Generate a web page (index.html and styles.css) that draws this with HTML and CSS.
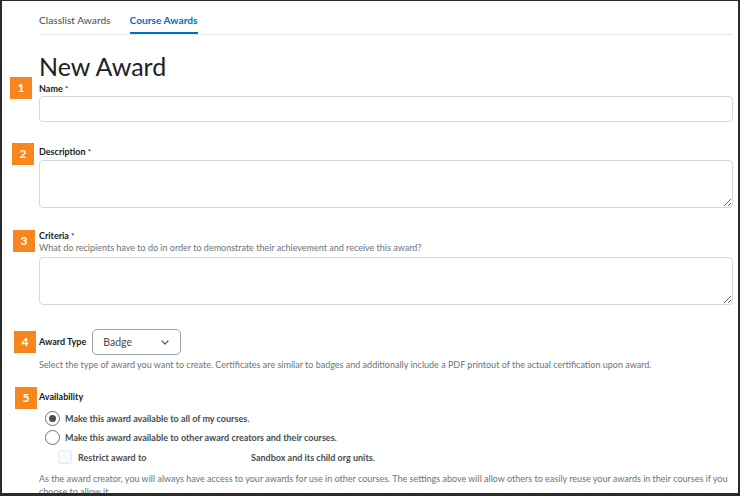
FILE: index.html
```html
<!DOCTYPE html>
<html lang="en">
<head>
    <meta charset="UTF-8">
    <meta name="viewport" content="width=device-width, initial-scale=1.0">
    <title>New Award</title>
    <link rel="stylesheet" href="styles.css">
</head>
<body>
    <div class="frame">
        <nav class="tabs">
            <a class="tab">Classlist Awards</a>
            <a class="tab active">Course Awards</a>
        </nav>

        <h1>New Award</h1>

        <div class="field field-name">
            <span class="step step-1">1</span>
            <label for="name">Name <span class="req">*</span></label>
            <input type="text" id="name">
        </div>

        <div class="field field-desc">
            <span class="step step-2">2</span>
            <label for="desc">Description <span class="req">*</span></label>
            <textarea id="desc"></textarea>
        </div>

        <div class="field field-criteria">
            <span class="step step-3">3</span>
            <label for="criteria">Criteria <span class="req">*</span></label>
            <p class="hint hint-tight">What do recipients have to do in order to demonstrate their achievement and receive this award?</p>
            <textarea id="criteria"></textarea>
        </div>

        <div class="field field-type">
            <span class="step step-4">4</span>
            <div class="type-row">
                <label for="type">Award Type</label>
                <div class="select">
                    <span>Badge</span>
                    <svg width="8" height="5" viewBox="0 0 8 5"><path d="M1 1l3 3 3-3" fill="none" stroke="#565a5c" stroke-width="1.2" stroke-linecap="round" stroke-linejoin="round"/></svg>
                </div>
            </div>
            <p class="hint">Select the type of award you want to create. Certificates are similar to badges and additionally include a PDF printout of the actual certification upon award.</p>
        </div>

        <div class="field field-avail">
            <span class="step step-5">5</span>
            <label>Availability</label>
            <div class="option">
                <span class="radio checked"></span>
                <span>Make this award available to all of my courses.</span>
            </div>
            <div class="option">
                <span class="radio"></span>
                <span>Make this award available to other award creators and their courses.</span>
            </div>
            <div class="option sub">
                <span class="checkbox"></span>
                <span class="restrict">Restrict award to</span>
                <span>Sandbox and its child org units.</span>
            </div>
            <p class="hint note">As the award creator, you will always have access to your awards for use in other courses. The settings above will allow others to easily reuse your awards in their courses if you choose to allow it.</p>
        </div>
    </div>
</body>
</html>
```

FILE: styles.css
```css
:root {
    --text: #202122;
    --label: #494c4e;
    --muted: #6e7376;
    --blue: #006fbf;
    --line: #d3d9e3;
    --orange: #f7861e;
}

html, body {
    margin: 0;
    padding: 0;
}

body {
    font-family: Lato, 'Open Sans', Arial, sans-serif;
    color: var(--text);
    background: #ffffff;
    overflow: hidden;
}

.frame {
    box-sizing: border-box;
    width: 740px;
    height: 496px;
    border: 2px solid #2a2a2a;
    border-top-width: 1px;
    border-bottom-width: 3px;
    padding: 0 5px 0 37px;
    overflow: hidden;
}

/* tabs */
.tabs {
    display: flex;
    gap: 19px;
    padding-top: 12px;
    border-bottom: 1px solid #e3e9f1;
}

.tab {
    font-size: 10.2px;
    line-height: 14px;
    color: var(--label);
    padding-bottom: 5px;
    border-bottom: 2px solid transparent;
}

.tab.active {
    color: var(--blue);
    font-weight: bold;
    border-bottom-color: var(--blue);
}

h1 {
    font-size: 25px;
    font-weight: normal;
    line-height: 25px;
    margin: 19px 0 4px;
    color: var(--text);
}

/* fields */
.field {
    position: relative;
}

.field label {
    display: block;
    font-size: 9px;
    font-weight: bold;
    line-height: 12px;
    color: var(--text);
}

.req {
    font-weight: normal;
    font-size: 8px;
    vertical-align: top;
}

input, textarea {
    display: block;
    box-sizing: border-box;
    width: 100%;
    border: 1px solid var(--line);
    border-radius: 4px;
    font-family: inherit;
    background: #fff;
}

input {
    height: 26px;
    margin-top: 1px;
}

textarea {
    height: 48px;
    resize: vertical;
}

.field-desc {
    margin-top: 24px;
}

.field-desc textarea {
    margin-top: 2px;
}

.field-criteria {
    margin-top: 22px;
}

.hint {
    margin: 4px 0 0;
    font-size: 9px;
    line-height: 12px;
    color: var(--muted);
}

.hint-tight {
    margin: 0 0 3px;
}

.field-type {
    margin-top: 24px;
}

.type-row {
    display: flex;
    align-items: center;
    gap: 6px;
}

.select {
    box-sizing: border-box;
    width: 89px;
    height: 26px;
    border: 1px solid #9ea3a7;
    border-radius: 5px;
    padding: 0 11px 0 10px;
    display: flex;
    align-items: center;
    justify-content: space-between;
    font-size: 10.5px;
    color: var(--label);
}

.field-avail {
    margin-top: 20px;
}

.field-avail > label {
    margin-bottom: 6px;
}

.option {
    display: flex;
    align-items: center;
    height: 19px;
    padding-left: 6px;
    gap: 5px;
    font-size: 9px;
    font-weight: bold;
    color: var(--label);
}

.option.sub {
    height: 20px;
    padding-left: 19px;
    gap: 6px;
}

.radio {
    box-sizing: border-box;
    width: 15px;
    height: 15px;
    border: 1px solid #6e7376;
    border-radius: 50%;
    display: flex;
    align-items: center;
    justify-content: center;
}

.radio.checked::after {
    content: "";
    width: 7px;
    height: 7px;
    border-radius: 50%;
    background: var(--label);
}

.checkbox {
    box-sizing: border-box;
    flex: none;
    width: 14px;
    height: 14px;
    border: 1px solid #e3e9f1;
    border-radius: 3px;
    background: #f9fafb;
}

.restrict {
    flex: 0 0 167px;
}

.note {
    margin-top: 5px;
    line-height: 13px;
}

/* numbered markers */
.step {
    position: absolute;
    width: 22px;
    height: 22px;
    background: var(--orange);
    color: #fff;
    font-size: 12px;
    font-weight: bold;
    line-height: 22px;
    text-align: center;
}

.step-1 { left: -29px; top: -6px; }
.step-2 { left: -27px; top: -3px; }
.step-3 { left: -26px; top: 0; }
.step-4 { left: -25px; top: 2px; }
.step-5 { left: -24px; top: -4px; }
```
